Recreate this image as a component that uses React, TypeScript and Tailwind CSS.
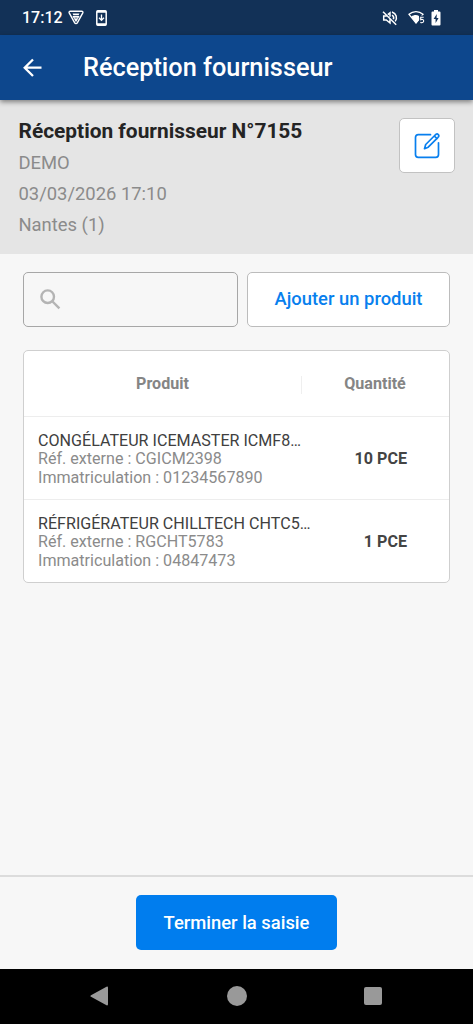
import React from "react";

type Product = { name: string; reference: string; plate: string; quantity: string };

const products: Product[] = [
  { name: "CONGÉLATEUR ICEMASTER ICMF8…", reference: "CGICM2398", plate: "01234567890", quantity: "10 PCE" },
  { name: "RÉFRIGÉRATEUR CHILLTECH CHTC5…", reference: "RGCHT5783", plate: "04847473", quantity: "1 PCE" },
];

function StatusBar() {
  return (
    <div className="flex h-[35px] shrink-0 items-center bg-[#123157] pl-[22px] pr-[32px] text-white">
      <span className="w-[42px] whitespace-nowrap text-[16px] font-medium leading-none">17:12</span>
      <svg className="ml-[4px] h-[15px] w-[16px]" viewBox="0 0 16 15" fill="none">
        <path d="M2.4 1.2h11.2c1 0 1.6.8 1.2 1.7L9.3 12.8c-.6 1-2 1-2.6 0L1.2 2.9C.8 2 1.400 1.200 2.400 1.200Z" stroke="currentColor" strokeWidth="1.4" />
        <path d="M4.600 3.400h6.800L10.600 5.200H5.400ZM4.400 6h7.200L8 12.200Z" fill="currentColor" />
        <path d="M6.500 8h3" stroke="#123157" strokeWidth="0.700" />
      </svg>
      <svg className="ml-[12px] h-[16px] w-[11px]" viewBox="0 0 11 16" fill="none">
        <rect x="0.800" y="0.800" width="9.400" height="14.400" rx="1" stroke="currentColor" strokeWidth="1.500" />
        <path d="M1 1.700h9M1 14.300h9" stroke="currentColor" strokeWidth="2" />
        <path d="M5.500 4.500v5M3 7.800l2.500 2.500L8 7.800" stroke="currentColor" strokeWidth="1.300" />
      </svg>
      <svg className="ml-auto h-[16px] w-[16px]" viewBox="0 0 16 16" fill="none" stroke="currentColor" strokeWidth="1.500">
        <path d="M1 1.800l13.200 13" />
        <path d="M4.800 6H1.700v4h2.600L8 13V9.200" />
        <path d="M5.800 4.600L8 2.800v4" />
        <path d="M10 2c4.500 1.500 5.600 6.200 3.200 9.400" />
        <path d="M10 5.200c1.600 1 2 2.600 1.400 4" />
      </svg>
      <svg className="ml-[10px] h-[15px] w-[18px]" viewBox="0 0 18 15">
        <path d="M1 4.300C5 .6 11 .6 15 4.300L8 13Z" fill="none" stroke="currentColor" strokeWidth="1.300" />
        <path d="M3.300 6.500C6 4.500 9 4.500 11 6v4L8 13.500Z" fill="currentColor" />
        <path d="M11.200 5.500H18V15h-6.800Z" fill="#123157" />
        <path d="M15.700 7.200h-3v2.500c1.300-.6 3-.3 3 1.300 0 1.700-2.100 2.100-3.300 1.200" fill="none" stroke="currentColor" strokeWidth="1.100" />
      </svg>
      <svg className="ml-[5px] h-[16px] w-[10px]" viewBox="0 0 10 16">
        <path d="M3 0h4v1.500h1.500q1 0 1 1v12q0 1-1 1h-7q-1 0-1-1v-12q0-1 1-1H3Z" fill="currentColor" />
        <path d="M5.800 4L2.600 9h2v4l3-5h-2Z" fill="#123157" />
      </svg>
    </div>
  );
}

function AppBar() {
  return (
    <header className="relative z-10 flex h-[65px] shrink-0 items-center bg-[#0d478d] pl-[23px] text-white shadow-[0_2px_5px_rgba(0,0,0,0.45)]">
      <svg className="h-[20px] w-[20px]" viewBox="0 0 20 20" fill="none" stroke="currentColor" strokeWidth="2.300">
        <path d="M18.500 9.700H2M10 1.500L1.700 9.700l8.300 8.300" />
      </svg>
      <h1 className="ml-[40px] text-[25.300px] font-medium leading-none">Réception fournisseur</h1>
    </header>
  );
}

function ReceiptSummary() {
  return (
    <section className="flex h-[154px] shrink-0 justify-between bg-[#e5e5e5] pl-[18.500px] pr-[18px] pt-[16px]">
      <div className="text-[18.400px] leading-[31px] text-[#8b8b8b]">
        <h2 className="text-[20.900px] font-bold text-[#242424]">Réception fournisseur N°7155</h2>
        <p>DEMO</p>
        <p>03/03/2026 17:10</p>
        <p>Nantes (1)</p>
      </div>
      <button aria-label="Modifier" className="mt-[2px] flex h-[55px] w-[56px] items-center justify-center rounded-[5px] border border-[#c2c2c2] bg-white text-[#087fee]">
        <svg className="h-[26px] w-[26px]" viewBox="0 0 26 26" fill="none" stroke="currentColor" strokeWidth="1.700" strokeLinecap="round" strokeLinejoin="round">
          <path d="M16.500 1.700H4.300Q1.500 1.700 1.500 4.500v17Q1.500 24.300 4.300 24.300h17.400q2.800 0 2.800-2.800V9.800" />
          <path d="M10.500 15.700l1.200-4.200L21.200 2l.8-.7c1.700-1 3.500.8 2.500 2.400l-.7.900-9.600 9.600ZM20.300 3l2.700 2.700" />
        </svg>
      </button>
    </section>
  );
}

function Toolbar() {
  return (
    <div className="flex gap-[9px]">
      <label className="flex h-[55px] w-[215px] items-center rounded-[5px] border border-[#a7a7a7] pl-[16px] text-[#b4b4b4]">
        <svg className="h-[21px] w-[21px]" viewBox="0 0 21 21" fill="none" stroke="currentColor" strokeWidth="2.400">
          <circle cx="7.700" cy="7.700" r="6.300" />
          <path d="M12.500 12.500l6.900 6.900" />
        </svg>
        <input aria-label="Rechercher" className="ml-2 w-[150px] bg-transparent text-[18px] text-[#444] outline-none" />
      </label>
      <button className="h-[55px] w-[203px] rounded-[5px] border border-[#bcbcbc] bg-white pb-px text-[18.400px] font-medium text-[#087fee]">Ajouter un produit</button>
    </div>
  );
}

function ProductTable() {
  return (
    <section className="mt-[23px] w-[427px] overflow-hidden rounded-[5px] border border-[#cfcfcf] bg-white">
      <div className="flex h-[65px] items-center pt-[2px] text-[16.100px] font-bold text-[#858585]">
        <div className="w-[277px] text-center">Produit</div>
        <div className="h-[18px] w-px bg-[#efefef]" />
        <div className="w-[146px] text-center">Quantité</div>
      </div>
      {products.map((product) => (
        <div key={product.reference} className="flex h-[83px] items-center border-t border-[#ededed] pl-[14px] pr-[42px] pt-[3px]">
          <div className="grow whitespace-nowrap text-[16.100px] leading-[18.500px] text-[#8b8b8b]">
            <p className="text-[#404040]">{product.name}</p>
            <p>Réf. externe : {product.reference}</p>
            <p>Immatriculation : {product.plate}</p>
          </div>
          <span className="whitespace-nowrap text-[16.100px] font-bold text-[#444444]">{product.quantity}</span>
        </div>
      ))}
    </section>
  );
}

function NavigationBar() {
  return (
    <nav className="flex h-[55px] shrink-0 items-center bg-black pb-px pl-[90px] text-[#999999]">
      <svg className="h-[20px] w-[18px]" viewBox="0 0 18 20" fill="currentColor">
        <path d="M16.500.7L1 9.200q-1.200.8 0 1.600l15.500 8.500q1.500.6 1.500-1V1.700q0-1.600-1.500-1Z" />
      </svg>
      <div className="ml-[119px] h-[20px] w-[20px] rounded-full bg-[#999999]" />
      <div className="ml-[117px] h-[18px] w-[18px] rounded-[2px] bg-[#999999]" />
    </nav>
  );
}

export default function App() {
  return (
    <div className="flex h-[1024px] w-[473px] flex-col overflow-hidden bg-[#f7f7f7] font-[Roboto,sans-serif]">
      <StatusBar />
      <AppBar />
      <ReceiptSummary />
      <main className="grow pl-[23px] pt-[18px]">
        <Toolbar />
        <ProductTable />
      </main>
      <footer className="flex h-[94px] shrink-0 justify-center border-t-2 border-[#dcdcdc] pt-[18px]">
        <button className="h-[55px] w-[201px] rounded-[5px] bg-[#007dee] text-[18.400px] font-medium text-white">Terminer la saisie</button>
      </footer>
      <NavigationBar />
    </div>
  );
}
